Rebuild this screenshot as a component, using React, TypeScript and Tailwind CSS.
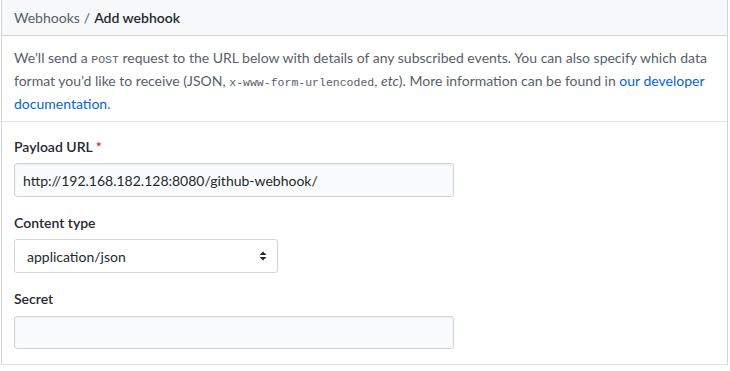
import React from "react";

const sans = "font-['Segoe_UI','Lato','Liberation_Sans',sans-serif]";
const mono = "font-['Liberation_Mono','DejaVu_Sans_Mono',monospace]";

function Label({ children }: { children: React.ReactNode }) {
  return <div className="text-[14px] font-semibold leading-[20px] text-[#24292e]">{children}</div>;
}

export default function App() {
  return (
    <div className={`${sans} bg-white w-[730px] h-[371px] overflow-hidden`}>
      <div className="ml-px w-[727px] border-x border-[#d1d5da]">
        {/* header */}
        <div className="h-[36px] bg-[#f6f8fa] border-b border-[#d1d5da] px-[12px] flex items-center text-[14px] text-[#586069]">
          Webhooks<span className="mx-[4px]">/</span>
          <strong className="font-semibold text-[#24292e]">Add webhook</strong>
        </div>

        {/* intro */}
        <div className="px-[12px] pt-[11px] pb-[7px] border-b border-[#e1e4e8] text-[14px] leading-[21px] text-[#586069] whitespace-nowrap">
          We’ll send a <code className={`${mono} text-[11.5px]`}>POST</code> request to the URL below with details of any
          subscribed events. You can also specify which data
          <br />
          format you’d like to receive (JSON, <code className={`${mono} text-[11.5px]`}>x-www-form-urlencoded</code>,{" "}
          <em>etc</em>). More information can be found in{" "}
          <a className="text-[#0366d6]">our developer</a>
          <br />
          <a className="text-[#0366d6]">documentation</a>.
        </div>

        {/* form */}
        <div className="px-[12px] pt-[15px] pb-[15px] border-b border-[#e1e4e8] flex flex-col">
          <Label>
            Payload URL <span className="text-[#cb2431]">*</span>
          </Label>
          <div className="mt-[6px] w-[440px] h-[34px] rounded-[3px] border border-[#d1d5da] bg-[#fafbfc] px-[8px] flex items-center text-[14px] text-[#24292e] shadow-[inset_0_1px_2px_rgba(27,31,35,0.075)]">
            http://192.168.182.128:8080/github-webhook/
          </div>

          <div className="mt-[16px]">
            <Label>Content type</Label>
          </div>
          <div className="mt-[6px] w-[264px] h-[34px] rounded-[3px] border border-[#d1d5da] bg-white pl-[12px] pr-[8px] flex items-center justify-between text-[14px] text-[#24292e]">
            <span>application/json</span>
            <svg width="8" height="10" viewBox="0 0 8 10" className="mr-[2px]">
              <path d="M4 0.5 L7.5 4 H0.5 Z" fill="#24292e" />
              <path d="M4 9.5 L7.5 6 H0.5 Z" fill="#24292e" />
            </svg>
          </div>

          <div className="mt-[16px]">
            <Label>Secret</Label>
          </div>
          <div className="mt-[7px] w-[440px] h-[33px] rounded-[3px] border border-[#d1d5da] bg-[#fafbfc] shadow-[inset_0_1px_2px_rgba(27,31,35,0.075)]" />
        </div>
      </div>
    </div>
  );
}
